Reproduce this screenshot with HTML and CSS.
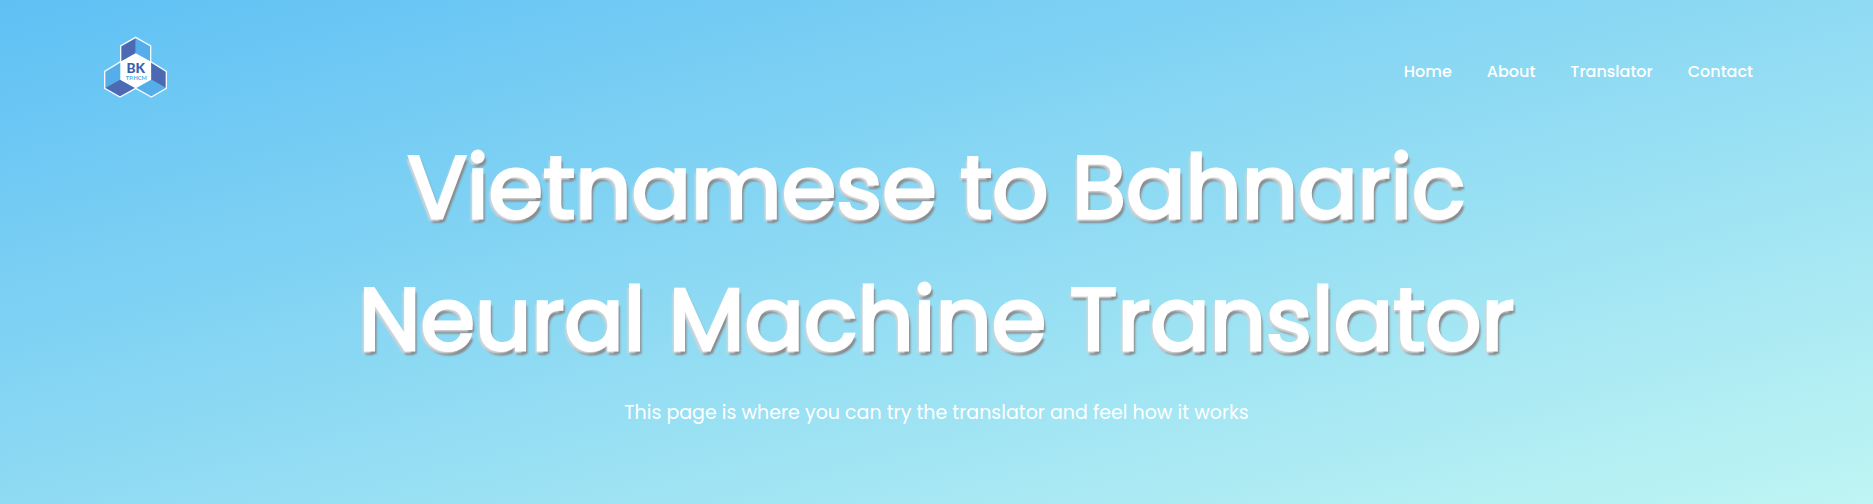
FILE: index.html
```html
<!DOCTYPE html>
<html lang="en">
<head>
<meta charset="utf-8">
<meta name="viewport" content="width=device-width, initial-scale=1">
<title>Vietnamese to Bahnaric Translator</title>
<link rel="stylesheet" href="styles.css">
</head>
<body>
<div class="hero">
  <header class="header">
    <a class="logo" href="#" aria-label="Home page">
      <svg class="logo-mark" viewBox="24 21 195 186" aria-hidden="true">
        <path class="dark" d="M77 51L122 25V73L77 98Z"/>
        <path class="light" d="M122 25L167 51V98L122 73Z"/>
        <path class="light" d="M29 127L75 100V152L29 178Z"/>
        <path class="dark" d="M29 178L75 152L121 178L75 204Z"/>
        <path class="dark" d="M169 100L214 127V178L169 152Z"/>
        <path class="light" d="M123 178L169 152L214 178L169 204Z"/>
        <path class="core" d="M122 73L168 98V152L122 178L76 152V98Z"/>
        <path class="edge" d="M77 98V51L122 25L167 51V98L214 127V178L169 204L122 178L75 204L29 178V127Z"/>
        <text class="logo-name" x="122" y="132">BK</text>
        <text class="logo-city" x="124" y="152">TP.HCM</text>
      </svg>
    </a>
    <nav class="nav">
      <a href="#">Home</a>
      <a href="#">About</a>
      <a href="#">Translator</a>
      <a href="#">Contact</a>
    </nav>
  </header>
  <main class="intro">
    <h1 class="title">Vietnamese to Bahnaric<br>Neural Machine Translator</h1>
    <p class="subtitle">This page is where you can try the translator and feel how it works</p>
  </main>
</div>
</body>
</html>
```
FILE: styles.css
```css
* {
  box-sizing: border-box;
}

body {
  margin: 0;
  font-family: Poppins, Inter, sans-serif;
  color: #fff;
}

.hero {
  min-height: 100vh;
  background: linear-gradient(to bottom right, #5fc0f4, #bff5f3);
}

.header {
  display: flex;
  align-items: center;
  justify-content: space-between;
  padding: 36px 120px 0 103px;
}

.logo {
  display: flex;
}

.logo-mark {
  width: 65px;
  height: 62px;
}

.dark {
  fill: #4c69b4;
}

.light {
  fill: #55aee9;
}

.core {
  fill: #fff;
}

.edge {
  fill: none;
  stroke: #f2fbff;
  stroke-width: 4;
}

.logo-name,
.logo-city {
  text-anchor: middle;
}

.logo-name {
  font-family: Lato, sans-serif;
  font-size: 41px;
  font-weight: 900;
  fill: #3d5dad;
}

.logo-city {
  font-family: Lato, sans-serif;
  font-size: 17px;
  font-weight: 700;
  fill: #4fa9e4;
}

.nav {
  display: flex;
  gap: 35px;
  padding-top: 10px;
}

.nav a {
  color: #fff;
  font-size: 16px;
  font-weight: 500;
  line-height: 26px;
  text-decoration: none;
}

.intro {
  padding: 24px 24px 0;
  text-align: center;
}

.title {
  margin: 0;
  font-size: 88px;
  font-weight: 400;
  line-height: 132px;
  -webkit-text-stroke: 3px #fff;
  text-shadow:
    -3px 3px 2px #d3d6d8,
    3px 4px 2px #8a8d90,
    0 5px 2px #8a8d90;
}

.subtitle {
  margin: 12px 0 0;
  font-size: 19px;
  line-height: 30px;
}
```
